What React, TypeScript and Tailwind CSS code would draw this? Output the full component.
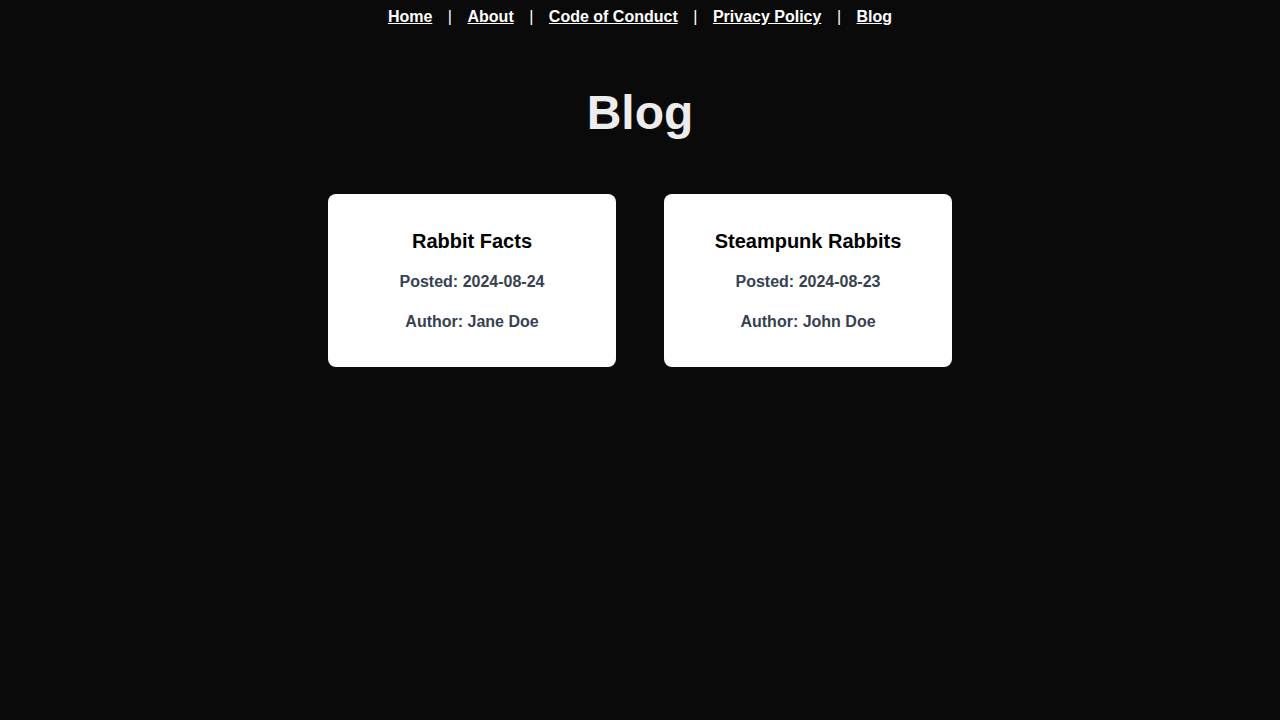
const links = ['Home', 'About', 'Code of Conduct', 'Privacy Policy', 'Blog'];

const posts = [
  { title: 'Rabbit Facts', posted: '2024-08-24', author: 'Jane Doe' },
  { title: 'Steampunk Rabbits', posted: '2024-08-23', author: 'John Doe' },
];

export default function App() {
  return (
    <div className="min-h-screen bg-[#0a0a0a] font-['Liberation_Sans',Arial,sans-serif]">
      <nav className="pt-[5px] flex justify-center items-center text-base leading-6 font-bold text-white">
        {links.map((l, i) => (
          <div key={l} className="flex items-center">
            {i > 0 && <span className="font-normal px-[15.5px]">|</span>}
            <a href="#" className="underline">
              {l}
            </a>
          </div>
        ))}
      </nav>

      <h1 className="mt-[60px] text-center text-5xl leading-[48px] font-bold text-[#ededed]">
        Blog
      </h1>

      <div className="mt-[57px] flex justify-center gap-12">
        {posts.map((p) => (
          <div
            key={p.title}
            className="w-[288px] bg-white rounded-lg pt-[33px] pb-[33px] text-center"
          >
            <h3 className="text-xl leading-7 font-bold text-black">{p.title}</h3>
            <p className="mt-[15px] text-base leading-6 font-bold text-[#374151]">
              Posted: {p.posted}
            </p>
            <p className="mt-4 text-base leading-6 font-bold text-[#374151]">
              Author: {p.author}
            </p>
          </div>
        ))}
      </div>
    </div>
  );
}
